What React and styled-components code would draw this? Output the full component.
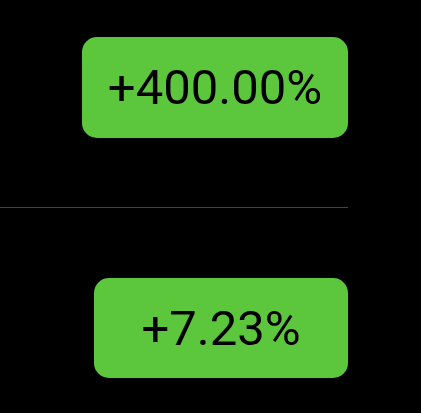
import React from "react";
import styled, { createGlobalStyle } from "styled-components";

const GlobalStyle = createGlobalStyle`
  html, body {
    margin: 0;
    padding: 0;
    background: #000;
  }
`;

const StyledMain = styled.main`
  display: flex;
  flex-direction: column;
  align-items: flex-end;
  width: 348px;
  padding-top: 37px;
  font-family: Roboto, "Liberation Sans", Arial, sans-serif;
`;

const StyledBadge = styled.div`
  display: flex;
  align-items: center;
  justify-content: center;
  box-sizing: border-box;
  width: ${(props) => props.$width}px;
  height: ${(props) => props.$height}px;
  background: #5cc63d;
  border-radius: 15px;
  color: #000;
  font-size: 49px;
  font-weight: 400;
  line-height: 1;
`;

const StyledDivider = styled.hr`
  align-self: stretch;
  height: 1px;
  margin: 69px 0 70px 0;
  border: none;
  background: #444;
`;

const changes = [
  { id: "day", label: "+400.00%", width: 266, height: 101 },
  { id: "week", label: "+7.23%", width: 254, height: 100 },
];

const App = () => {
  return (
    <>
      <GlobalStyle />
      <StyledMain>
        <StyledBadge $width={changes[0].width} $height={changes[0].height}>
          {changes[0].label}
        </StyledBadge>
        <StyledDivider />
        <StyledBadge $width={changes[1].width} $height={changes[1].height}>
          {changes[1].label}
        </StyledBadge>
      </StyledMain>
    </>
  );
};

export default App;
